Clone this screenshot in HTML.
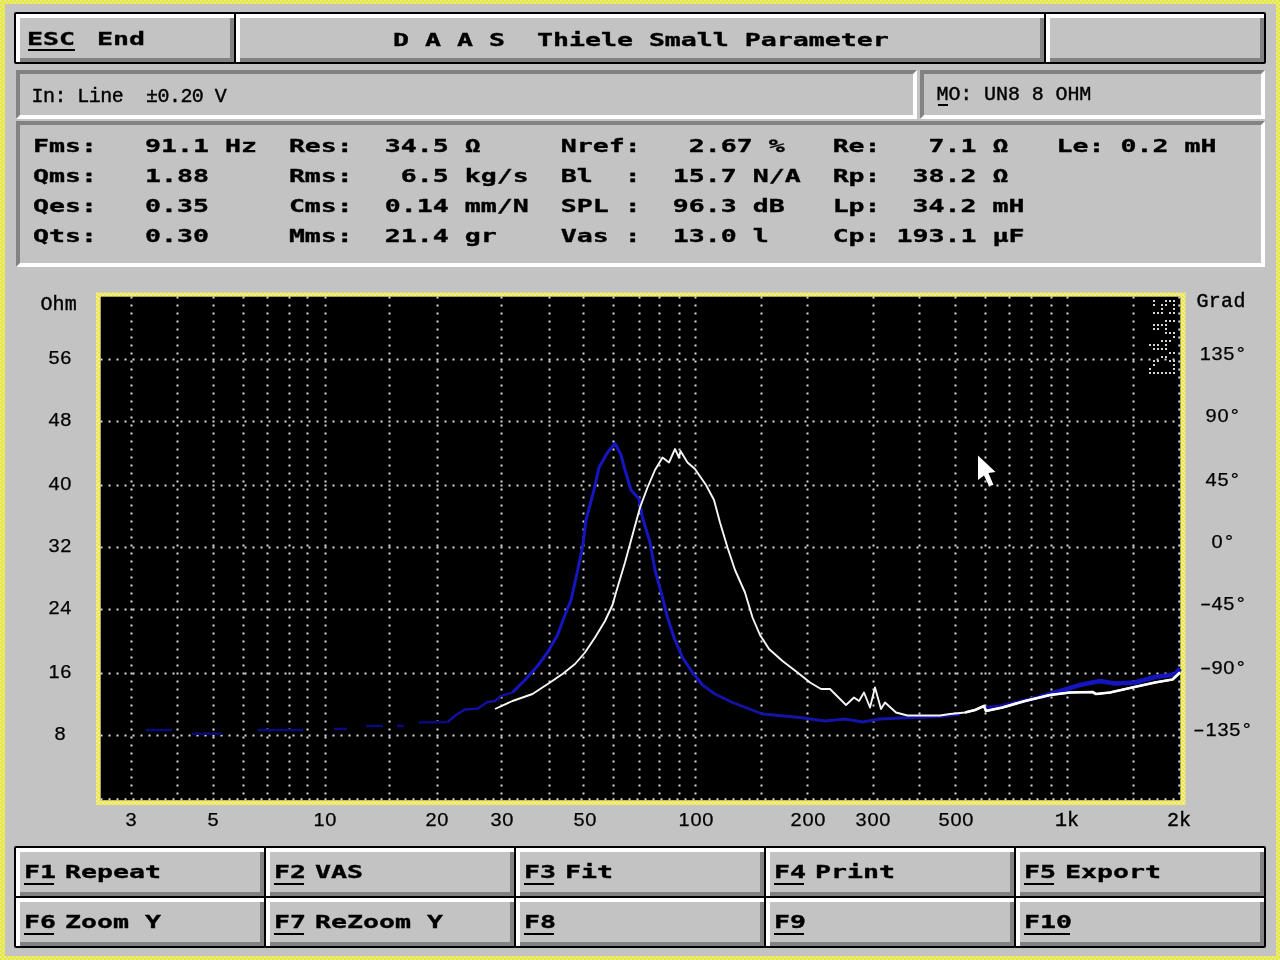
<!DOCTYPE html>
<html lang="en"><head><meta charset="utf-8"><title>DAAS Thiele Small Parameter</title>
<style>
html,body{margin:0;padding:0}
body{width:1280px;height:960px;overflow:hidden;position:relative;
 background:repeating-conic-gradient(#e4e83e 0 25%,#ecec7e 0 50%) 0 0/4px 4px;}
#ui{position:absolute;left:0;top:0;width:1280px;height:960px;will-change:transform}
#scr{position:absolute;left:5px;top:4px;width:1271px;height:952px;background:#c3c3c3}
.abs{position:absolute}
.btn{position:absolute;box-sizing:border-box;border:2px solid #000;border-radius:2px;background:#c3c3c3;
 box-shadow:inset 4px 4px 0 #fff,inset -4px -4px 0 #828282}
.pan{position:absolute;box-sizing:border-box;border-style:solid;border-width:4px;
 border-color:#828282 #fff #fff #828282;background:#c3c3c3}
.b{position:absolute;white-space:pre;color:#000;font:bold 18.4px/20px "DejaVu Sans Mono","Liberation Mono",monospace;
 transform-origin:0 0;transform:scaleX(1.4444);letter-spacing:0;-webkit-text-stroke:0.35px #000}
.u{position:absolute;height:2px;background:#000}
.t{position:absolute;white-space:pre;color:#000;font:20px/20px "Liberation Mono",monospace;-webkit-text-stroke:0.4px #000}
.n{position:absolute;white-space:pre;color:#000;font:18px/20px "Liberation Sans",sans-serif;-webkit-text-stroke:0.25px #000;text-align:center;transform:scaleX(1.11)}
.n i{display:inline-block;width:10.7px;text-align:center;font-style:normal}
.n i.h{transform:scaleX(1.7)}
svg{position:absolute;left:0;top:0}
</style></head><body>
<div id="scr"></div>
<div id="ui">

<div class="btn" style="left:14px;top:12px;width:222px;height:52px"></div>
<div class="btn" style="left:234px;top:12px;width:812px;height:52px"></div>
<div class="btn" style="left:1044px;top:12px;width:222px;height:52px"></div>
<div class="b" style="left:27.2px;top:29.4px">ESC</div>
<div class="u" style="left:28px;top:48.5px;width:47px"></div>
<div class="b" style="left:97.2px;top:29.4px">End</div>
<div class="b" style="left:393.2px;top:30.4px">D A A S  Thiele Small Parameter</div>
<div class="pan" style="left:16px;top:70px;width:901px;height:49px"></div>
<div class="pan" style="left:920px;top:70px;width:345px;height:49px"></div>
<div class="pan" style="left:16px;top:121px;width:1249px;height:146px"></div>
<div class="t" style="left:31.5px;top:87.2px;letter-spacing:-0.55px">In: Line  ±0.20 V</div>
<div class="t" style="left:936.5px;top:85.1px;letter-spacing:-0.1px">MO: UN8 8 OHM</div>
<div class="u" style="left:938px;top:104px;width:10px"></div>
<div class="b" style="left:32.9px;top:136.4px">Fms:   91.1 Hz  Res:  34.5 Ω     Nref:   2.67 %   Re:   7.1 Ω   Le: 0.2 mH</div>
<div class="b" style="left:32.9px;top:166.4px">Qms:   1.88     Rms:   6.5 kg/s  Bl  :  15.7 N/A  Rp:  38.2 Ω</div>
<div class="b" style="left:32.9px;top:196.4px">Qes:   0.35     Cms:  0.14 mm/N  SPL :  96.3 dB   Lp:  34.2 mH</div>
<div class="b" style="left:32.9px;top:226.4px">Qts:   0.30     Mms:  21.4 gr    Vas :  13.0 l    Cp: 193.1 µF</div>
<svg width="1280" height="960" viewBox="0 0 1280 960">
<defs><filter id="pix" x="-10%" y="-20%" width="120%" height="140%" primitiveUnits="userSpaceOnUse" color-interpolation-filters="sRGB"><feFlood x="1" y="1" width="1" height="1" flood-color="#fff"/><feComposite width="4" height="4"/><feTile result="g1"/><feFlood x="1" y="1" width="2" height="2" flood-color="#fff"/><feComposite width="4" height="4"/><feTile result="g2"/><feComposite in="SourceGraphic" in2="g1" operator="in"/><feComponentTransfer><feFuncA type="discrete" tableValues="0 0 1 1"/></feComponentTransfer><feMorphology operator="dilate" radius="1"/><feComposite in2="g2" operator="in"/></filter><pattern id="dots" width="4" height="4" patternUnits="userSpaceOnUse"><rect x="1" y="1" width="2.2" height="2.2" fill="#d4d4d4"/></pattern><pattern id="yk" width="4" height="4" patternUnits="userSpaceOnUse"><rect width="4" height="4" fill="#efe64c"/><rect width="2" height="2" fill="#f3ee94"/><rect x="2" y="2" width="2" height="2" fill="#f3ee94"/></pattern></defs>
<rect x="96" y="292.5" width="1089.5" height="512.5" fill="url(#yk)"/>
<rect x="100.7" y="296.7" width="1079.6" height="503.5" fill="#000"/>
<g stroke="#dcdcdc" stroke-width="2" stroke-dasharray="2 6" fill="none">
<path d="M131.5 296.5V800.5"/>
<path d="M177.5 296.5V800.5"/>
<path d="M213.5 296.5V800.5"/>
<path d="M243.5 296.5V800.5"/>
<path d="M267.5 296.5V800.5"/>
<path d="M289.5 296.5V800.5"/>
<path d="M307.5 296.5V800.5"/>
<path d="M325.5 296.5V800.5"/>
<path d="M389.5 296.5V800.5"/>
<path d="M437.5 296.5V800.5"/>
<path d="M501.5 296.5V800.5"/>
<path d="M549.5 296.5V800.5"/>
<path d="M583.5 296.5V800.5"/>
<path d="M613.5 296.5V800.5"/>
<path d="M639.5 296.5V800.5"/>
<path d="M659.5 296.5V800.5"/>
<path d="M679.5 296.5V800.5"/>
<path d="M695.5 296.5V800.5"/>
<path d="M761.5 296.5V800.5"/>
<path d="M807.5 296.5V800.5"/>
<path d="M873.5 296.5V800.5"/>
<path d="M919.5 296.5V800.5"/>
<path d="M955.5 296.5V800.5"/>
<path d="M985.5 296.5V800.5"/>
<path d="M1009.5 296.5V800.5"/>
<path d="M1031.5 296.5V800.5"/>
<path d="M1051.5 296.5V800.5"/>
<path d="M1067.5 296.5V800.5"/>
<path d="M1133.5 296.5V800.5"/>
<path d="M1179.3 296.5V800.5"/>
</g>
<g stroke="#dcdcdc" stroke-width="2" stroke-dasharray="2 6" stroke-dashoffset="-0.5" fill="none">
<path d="M100 359.5H1180.5"/>
<path d="M100 421.5H1180.5"/>
<path d="M100 485.5H1180.5"/>
<path d="M100 547.5H1180.5"/>
<path d="M100 609.5H1180.5"/>
<path d="M100 673.5H1180.5"/>
<path d="M100 735.5H1180.5"/>
<path d="M100 799.3H1180.5"/>
</g>
<g stroke="#0a0a80" stroke-width="2.4" fill="none">
<path d="M146.0 730.0 L172.0 730.0"/>
<path d="M192.0 733.7 L222.0 733.7"/>
<path d="M258.0 730.0 L303.0 730.0"/>
<path d="M334.0 729.0 L347.0 729.0"/>
<path d="M366.0 726.0 L383.0 726.0"/>
<path d="M397.0 726.0 L404.0 726.0"/>
<path d="M419.0 722.5 L447.0 722.0"/>
</g>
<path d="M447.5 722.0 L456.0 715.0 L465.0 709.5 L477.5 708.7 L487.5 702.0 L495.0 701.0 L501.0 696.0 L512.5 692.5" stroke="#1111a4" stroke-width="2.3" stroke-linejoin="round" fill="none"/>
<path d="M512.5 692.5 L525.0 680.0 L537.5 666.0 L547.5 652.5 L557.5 635.0 L565.0 615.0 L571.0 600.0 L575.0 582.5 L582.5 547.5 L586.0 520.0 L594.0 490.0 L599.0 467.5 L607.5 452.5 L615.0 443.5 L621.0 455.0 L625.0 470.0 L631.0 490.0 L639.0 499.0 L642.5 517.5 L650.0 542.5 L655.0 570.0 L662.5 597.5 L667.5 617.5 L674.0 637.5 L682.5 657.5 L692.5 672.5 L702.5 685.0" stroke="#1616c0" stroke-width="3" stroke-linejoin="round" fill="none"/>
<path d="M702.5 685.0 L715.0 694.0 L732.5 702.5 L762.5 714.0 L800.0 717.5 L825.0 721.0 L845.0 719.0 L862.5 722.0 L880.0 719.0 L912.5 717.5 L940.0 716.5 L960.0 714.0" stroke="#1313a8" stroke-width="2.8" stroke-linejoin="round" fill="none"/>
<path d="M1040.0 697.0 L1055.0 692.5 L1067.0 689.0 L1080.0 685.0 L1100.0 681.0 L1115.0 683.5 L1135.0 682.5 L1155.0 677.0 L1175.0 674.5 L1180.0 668.5" stroke="#1515bd" stroke-width="4.6" stroke-linejoin="round" fill="none"/>
<path d="M985 708L1000 706.5L1040 697" stroke="#1010a0" stroke-width="4" fill="none"/>
<path d="M495.0 709.0 L512.5 701.0 L532.5 694.0 L550.0 682.5 L562.5 674.0 L575.0 664.0 L585.0 652.5 L595.0 637.5 L605.0 621.0 L612.5 605.0 L616.0 592.5 L625.0 562.5 L632.5 535.0 L640.0 507.5 L647.5 487.5 L655.0 470.0 L662.5 457.5 L669.0 462.5 L675.0 449.0 L679.0 457.5 L680.5 451.0 L687.5 462.5 L695.0 469.0 L706.0 485.0 L714.0 500.0 L720.0 522.5 L727.5 547.5 L735.0 570.0 L745.0 592.5 L752.5 617.5 L760.0 635.0 L769.0 649.0 L782.5 661.0 L797.5 672.5 L810.0 682.5 L821.0 689.0 L830.0 689.0 L846.0 705.0 L854.0 697.5 L859.0 701.0 L864.0 692.5 L870.0 707.5 L875.0 687.5 L881.0 709.0 L885.0 702.5 L896.0 712.5 L907.5 715.5 L940.0 715.5 L950.0 714.0 L965.0 712.5 L975.0 710.0 L984.0 706.0 L986.0 711.0 L1002.5 707.5 L1025.0 701.0 L1050.0 695.0 L1070.0 692.5 L1092.5 692.0 L1096.0 694.0 L1110.0 692.5 L1130.0 688.0 L1155.0 682.5 L1172.5 679.5 L1180.0 672.5" stroke="#f6f6f6" stroke-width="1.9" stroke-linejoin="round" fill="none"/>
<path d="M965.0 712.5 L975.0 710.0 L984.0 706.0 L986.0 711.0 L1002.5 707.5 L1025.0 701.0 L1050.0 695.0 L1070.0 692.5 L1092.5 692.0 L1096.0 694.0 L1110.0 692.5 L1130.0 688.0 L1155.0 682.5 L1172.5 679.5 L1180.0 672.5" stroke="#fff" stroke-width="2.7" stroke-linejoin="round" fill="none"/>
<g transform="translate(1176 379) rotate(-90)"><text x="2" y="0" font-family="Liberation Sans, sans-serif" font-size="36" textLength="78" lengthAdjust="spacingAndGlyphs" fill="#d2d2d2" stroke="#d2d2d2" stroke-width="1" filter="url(#pix)">DAAS</text></g>
<path d="M978 455.5L995.5 472L988.5 473L993.5 485L989 486L984 475.5L978 480Z" fill="#fff"/>
</svg>
<div class="n" style="left:19.5px;top:347.8px;width:80px"><i>5</i><i>6</i></div>
<div class="n" style="left:19.5px;top:409.8px;width:80px"><i>4</i><i>8</i></div>
<div class="n" style="left:19.5px;top:473.8px;width:80px"><i>4</i><i>0</i></div>
<div class="n" style="left:19.5px;top:535.8px;width:80px"><i>3</i><i>2</i></div>
<div class="n" style="left:19.5px;top:597.8px;width:80px"><i>2</i><i>4</i></div>
<div class="n" style="left:19.5px;top:661.8px;width:80px"><i>1</i><i>6</i></div>
<div class="n" style="left:19.5px;top:723.8px;width:80px"><i>8</i></div>
<div class="n" style="left:1183.0px;top:343.8px;width:80px"><i>1</i><i>3</i><i>5</i><i>°</i></div>
<div class="n" style="left:1183.0px;top:405.8px;width:80px"><i>9</i><i>0</i><i>°</i></div>
<div class="n" style="left:1183.0px;top:469.8px;width:80px"><i>4</i><i>5</i><i>°</i></div>
<div class="n" style="left:1183.0px;top:531.8px;width:80px"><i>0</i><i>°</i></div>
<div class="n" style="left:1183.0px;top:593.8px;width:80px"><i class="h">-</i><i>4</i><i>5</i><i>°</i></div>
<div class="n" style="left:1183.0px;top:657.8px;width:80px"><i class="h">-</i><i>9</i><i>0</i><i>°</i></div>
<div class="n" style="left:1183.0px;top:719.8px;width:80px"><i class="h">-</i><i>1</i><i>3</i><i>5</i><i>°</i></div>
<div class="n" style="left:90.9px;top:809.8px;width:80px"><i>3</i></div>
<div class="n" style="left:173.2px;top:809.8px;width:80px"><i>5</i></div>
<div class="n" style="left:285.0px;top:809.8px;width:80px"><i>1</i><i>0</i></div>
<div class="n" style="left:396.8px;top:809.8px;width:80px"><i>2</i><i>0</i></div>
<div class="n" style="left:462.1px;top:809.8px;width:80px"><i>3</i><i>0</i></div>
<div class="n" style="left:544.5px;top:809.8px;width:80px"><i>5</i><i>0</i></div>
<div class="n" style="left:656.2px;top:809.8px;width:80px"><i>1</i><i>0</i><i>0</i></div>
<div class="n" style="left:768.0px;top:809.8px;width:80px"><i>2</i><i>0</i><i>0</i></div>
<div class="n" style="left:833.4px;top:809.8px;width:80px"><i>3</i><i>0</i><i>0</i></div>
<div class="n" style="left:915.7px;top:809.8px;width:80px"><i>5</i><i>0</i><i>0</i></div>
<div class="t" style="left:1055.0px;top:810.9px">1k</div>
<div class="t" style="left:1167.0px;top:810.9px">2k</div>
<div class="t" style="left:40.5px;top:294.9px;letter-spacing:0.1px">Ohm</div>
<div class="t" style="left:1196.5px;top:292.4px;letter-spacing:0.3px">Grad</div>
<div class="btn" style="left:14px;top:846px;width:252px;height:52px"></div>
<div class="btn" style="left:264px;top:846px;width:252px;height:52px"></div>
<div class="btn" style="left:514px;top:846px;width:252px;height:52px"></div>
<div class="btn" style="left:764px;top:846px;width:252px;height:52px"></div>
<div class="btn" style="left:1014px;top:846px;width:252px;height:52px"></div>
<div class="btn" style="left:14px;top:896px;width:252px;height:52px"></div>
<div class="btn" style="left:264px;top:896px;width:252px;height:52px"></div>
<div class="btn" style="left:514px;top:896px;width:252px;height:52px"></div>
<div class="btn" style="left:764px;top:896px;width:252px;height:52px"></div>
<div class="btn" style="left:1014px;top:896px;width:252px;height:52px"></div>
<div class="b" style="left:23.6px;top:862.4px">F1</div>
<div class="u" style="left:24.4px;top:882.5px;width:29.6px"></div>
<div class="b" style="left:64.8px;top:862.4px">Repeat</div>
<div class="b" style="left:273.6px;top:862.4px">F2</div>
<div class="u" style="left:274.4px;top:882.5px;width:29.6px"></div>
<div class="b" style="left:314.8px;top:862.4px">VAS</div>
<div class="b" style="left:523.6px;top:862.4px">F3</div>
<div class="u" style="left:524.4px;top:882.5px;width:29.6px"></div>
<div class="b" style="left:564.8px;top:862.4px">Fit</div>
<div class="b" style="left:773.6px;top:862.4px">F4</div>
<div class="u" style="left:774.4px;top:882.5px;width:29.6px"></div>
<div class="b" style="left:814.8px;top:862.4px">Print</div>
<div class="b" style="left:1023.6px;top:862.4px">F5</div>
<div class="u" style="left:1024.4px;top:882.5px;width:29.6px"></div>
<div class="b" style="left:1064.8px;top:862.4px">Export</div>
<div class="b" style="left:23.6px;top:912.4px">F6</div>
<div class="u" style="left:24.4px;top:932.5px;width:29.6px"></div>
<div class="b" style="left:64.8px;top:912.4px">Zoom Y</div>
<div class="b" style="left:273.6px;top:912.4px">F7</div>
<div class="u" style="left:274.4px;top:932.5px;width:29.6px"></div>
<div class="b" style="left:314.8px;top:912.4px">ReZoom Y</div>
<div class="b" style="left:523.6px;top:912.4px">F8</div>
<div class="u" style="left:524.4px;top:932.5px;width:29.6px"></div>
<div class="b" style="left:773.6px;top:912.4px">F9</div>
<div class="u" style="left:774.4px;top:932.5px;width:29.6px"></div>
<div class="b" style="left:1023.6px;top:912.4px">F10</div>
<div class="u" style="left:1024.4px;top:932.5px;width:45.6px"></div>
</div>
</body></html>
